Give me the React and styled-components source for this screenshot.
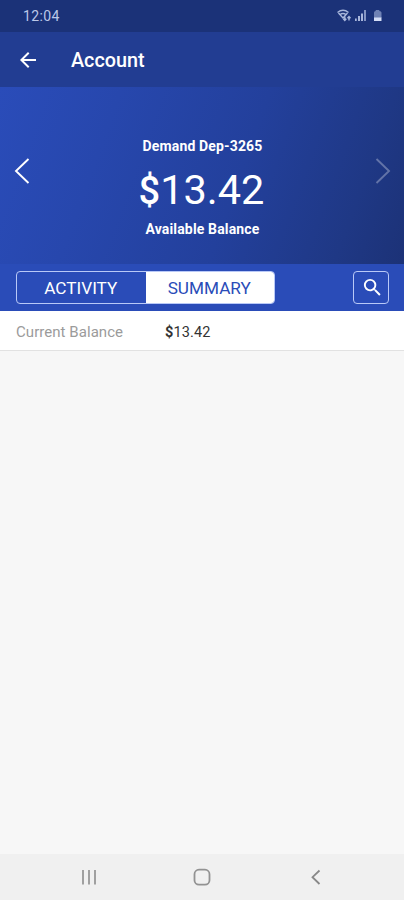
import React, { useState } from "react"
import styled, { createGlobalStyle, css } from "styled-components"
import { MdArrowBack, MdSearch } from "react-icons/md"

const colors = {
  statusBar: "#1b3278",
  header: "#223d92",
  primary: "#2a4cb8",
  page: "#f7f7f7",
  navBar: "#f0f0f0",
  outline: "#b9c9f7",
}

const GlobalStyle = createGlobalStyle`
  * {
    box-sizing: border-box;
  }
  body {
    margin: 0;
    font-family: Roboto, sans-serif;
  }
  button {
    font-family: inherit;
    padding: 0;
    margin: 0;
    border: 0;
    background: none;
    color: inherit;
  }
  svg {
    display: block;
  }
`

const Screen = styled.div`
  display: flex;
  flex-direction: column;
  height: 100vh;
  min-height: 900px;
  background: ${colors.page};
`

const StatusBar = styled.div`
  display: flex;
  align-items: center;
  justify-content: space-between;
  height: 32px;
  padding: 0 19px 0 23px;
  background: ${colors.statusBar};
  color: #bcc8e8;
  font-size: 14px;
  letter-spacing: 0.4px;
`

const Header = styled.header`
  display: flex;
  align-items: center;
  height: 55px;
  padding: 0 16px;
  gap: 31px;
  background: ${colors.header};
  color: #fff;
`

const Title = styled.h1`
  margin: 0;
  padding-top: 1px;
  font-size: 19.8px;
  font-weight: 500;
`

const Hero = styled.section`
  display: flex;
  align-items: center;
  justify-content: space-between;
  height: 177px;
  padding: 0 13px 0 14px;
  background: linear-gradient(110deg, #2a4cb9 0%, #2747ad 26%, #23409c 58%, #1f3885 85%, #1c3277 100%);
  color: #fff;
`

const Chevron = styled.button`
  height: 28px;
  margin-bottom: 9px;
  opacity: ${props => (props.disabled ? 0.3 : 1)};
`

const Balance = styled.div`
  display: flex;
  flex-direction: column;
  align-items: center;
  padding-top: 24px;
`

const BalanceLabel = styled.div`
  font-size: 14px;
  font-weight: 700;
  line-height: 18px;
  letter-spacing: 0.15px;
`

const Amount = styled.div`
  height: 50px;
  margin: 10px 2px 5px 0;
  font-size: 41.5px;
  line-height: 50px;
  letter-spacing: 0;
  span {
    font-size: 38px;
    font-weight: 500;
    line-height: 1;
  }
`

const Toolbar = styled.div`
  display: flex;
  align-items: flex-start;
  justify-content: space-between;
  height: 47px;
  padding: 7px 15px 0 16px;
  background: ${colors.primary};
`

const Tabs = styled.div`
  display: flex;
  width: 259px;
  height: 33px;
  border: 1.5px solid ${colors.outline};
  border-radius: 4px;
  overflow: hidden;
`

const Tab = styled.button`
  flex: 1;
  padding: 2px 1px 0 0;
  font-size: 17.2px;
  line-height: 29px;
  color: #fff;
  ${props => props.$isActive
    && css`
      background: #fff;
      color: ${colors.primary};
    `}
`

const SearchButton = styled.button`
  display: flex;
  align-items: center;
  justify-content: center;
  width: 36px;
  height: 33px;
  padding-left: 2px;
  border: 1px solid ${colors.outline};
  border-radius: 4px;
  color: #fff;
`

const DetailRow = styled.div`
  display: flex;
  align-items: center;
  height: 40px;
  padding: 3px 16px 0;
  border-bottom: 1px solid #e2e2e2;
  background: #fff;
  font-size: 15px;
`

const DetailLabel = styled.div`
  width: 149px;
  color: #9b9b9b;
  letter-spacing: 0.05px;
`

const DetailValue = styled.div`
  color: #333;
  font-size: 14.5px;
  letter-spacing: 0.15px;
  span {
    font-weight: 700;
  }
`

const NavBar = styled.nav`
  display: flex;
  align-items: center;
  justify-content: space-between;
  height: 46px;
  margin-top: auto;
  padding: 0 78px;
  background: ${colors.navBar};
`

const StatusIcons = () => (
  <svg width="48" height="16" viewBox="0 0 48 16" fill="none">
    <g stroke="#a9b7dc" strokeWidth="1.4">
      <path d="M0.500 4.500Q6 0 11.500 4.500" />
      <path d="M2.800 6.800Q6 4.300 9.200 6.800" />
      <path d="M1.500 5L6 10L10.500 5" />
      <path d="M7.800 8.500V12.500M6.300 10.800L7.800 12.500L9.300 10.800M12 12.500V8.500M10.500 10.200L12 8.500L13.500 10.200" />
    </g>
    <g fill="#a9b7dc">
      <path d="M18 10.500h1.700V13H18z" />
      <path d="M21 8h2v5H21z" />
      <path d="M24 5.500h2v7.500H24z" />
      <path d="M27 2h2v11H27z" opacity="0.75" />
    </g>
    <path d="M37 4.500Q37 3 38.700 3V2H42.300V3Q44.500 3 44.500 4.500V10H37z" fill="#6f82b5" />
    <path d="M37 9.500H44.500V13H37z" fill="#d5def6" />
  </svg>
)

const ChevronIcon = ({ flipped }) => (
  <svg width="16" height="28" viewBox="0 0 16 28" fill="none" stroke="#fff" strokeWidth="1.9">
    <path d={flipped ? "M1.500 2L14 14L1.500 26" : "M14.500 2L2 14L14.500 26"} />
  </svg>
)

const RecentsIcon = () => (
  <svg width="22" height="18" viewBox="0 0 22 18" fill="none" stroke="#a0a0a0" strokeWidth="2">
    <path d="M5 2V16.500M11 2V16.500M17 2V16.500" />
  </svg>
)

const HomeIcon = () => (
  <svg width="20" height="18" viewBox="0 0 20 18" fill="none" stroke="#929292" strokeWidth="1.8">
    <rect x="1.500" y="1.700" width="15" height="15" rx="4.500" />
  </svg>
)

const BackIcon = () => (
  <svg width="20" height="18" viewBox="0 0 20 18" fill="none" stroke="#888" strokeWidth="1.8">
    <path d="M13.500 2.500L6.500 9.200L13.500 16" />
  </svg>
)

const TABS = ["ACTIVITY", "SUMMARY"]

const App = () => {
  const [activeTab, setActiveTab] = useState("SUMMARY")

  return (
    <Screen>
      <GlobalStyle />
      <StatusBar>
        <span>12:04</span>
        <StatusIcons />
      </StatusBar>
      <Header>
        <MdArrowBack size={24} />
        <Title>Account</Title>
      </Header>
      <Hero>
        <Chevron aria-label="Previous account">
          <ChevronIcon />
        </Chevron>
        <Balance>
          <BalanceLabel>Demand Dep-3265</BalanceLabel>
          <Amount>
            <span>$</span>
            13.42
          </Amount>
          <BalanceLabel>Available Balance</BalanceLabel>
        </Balance>
        <Chevron aria-label="Next account" disabled>
          <ChevronIcon flipped />
        </Chevron>
      </Hero>
      <Toolbar>
        <Tabs>
          {TABS.map(tab => (
            <Tab key={tab} $isActive={activeTab === tab} onClick={() => setActiveTab(tab)}>
              {tab}
            </Tab>
          ))}
        </Tabs>
        <SearchButton aria-label="Search">
          <MdSearch size={23} />
        </SearchButton>
      </Toolbar>
      <DetailRow>
        <DetailLabel>Current Balance</DetailLabel>
        <DetailValue>
          <span>$</span>
          13.42
        </DetailValue>
      </DetailRow>
      <NavBar>
        <RecentsIcon />
        <HomeIcon />
        <BackIcon />
      </NavBar>
    </Screen>
  )
}

export default App
